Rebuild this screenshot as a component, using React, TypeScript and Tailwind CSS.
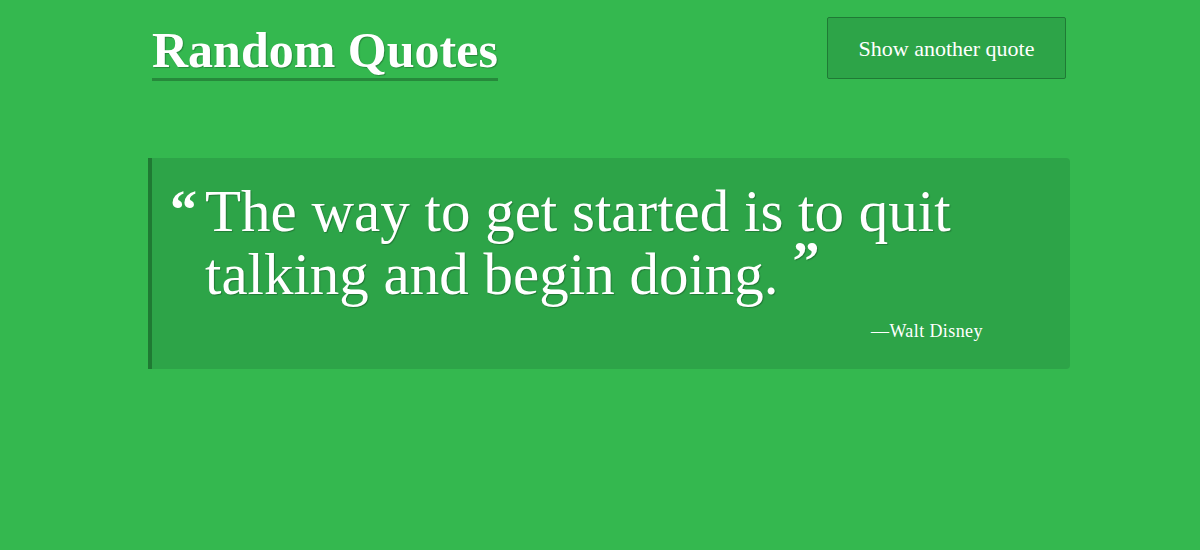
export default function App() {
  const quote = {
    text: 'The way to get started is to quit talking and begin doing.',
    author: 'Walt Disney',
  };

  return (
    <div className="min-h-screen h-[550px] bg-[#34b84f] pl-[18px] font-['Liberation_Serif',serif] text-white">
      <div className="mx-auto w-[922px]">
        <header className="flex items-start justify-between pl-1 pr-1 pt-[17px]">
          <h1 className="mt-[9px] border-b-[3px] border-[#26893b] pb-[4px] text-[50px] font-bold leading-[48px] [text-shadow:1px_1px_1px_rgba(0,0,0,0.25)]">
            Random Quotes
          </h1>
          <button className="h-[62px] w-[239px] rounded-[2px] border border-[#1f7a35] bg-[#2da448] text-[22px] text-white">
            Show another quote
          </button>
        </header>

        <blockquote className="mt-[77px] h-[211px] rounded-r-[4px] border-l-4 border-[#1f7a33] bg-[#2da448] pl-[18px] pr-6 pt-[22px]">
          <div className="flex items-start gap-[8px]">
            <span className="mt-[8px] text-[54px] font-bold leading-[44px]">“</span>
            <p className="text-[59px] leading-[63px] [text-shadow:1px_1px_1px_rgba(0,0,0,0.25)]">
              {quote.text}
              <span className="ml-[14px] inline-block -translate-y-[4px] align-top text-[54px] font-bold leading-[44px]">”</span>
            </p>
          </div>
          <div className="mt-[12px] pl-[701px] text-[18px] tracking-[0.4px]">—{quote.author}</div>
        </blockquote>
      </div>
    </div>
  );
}
